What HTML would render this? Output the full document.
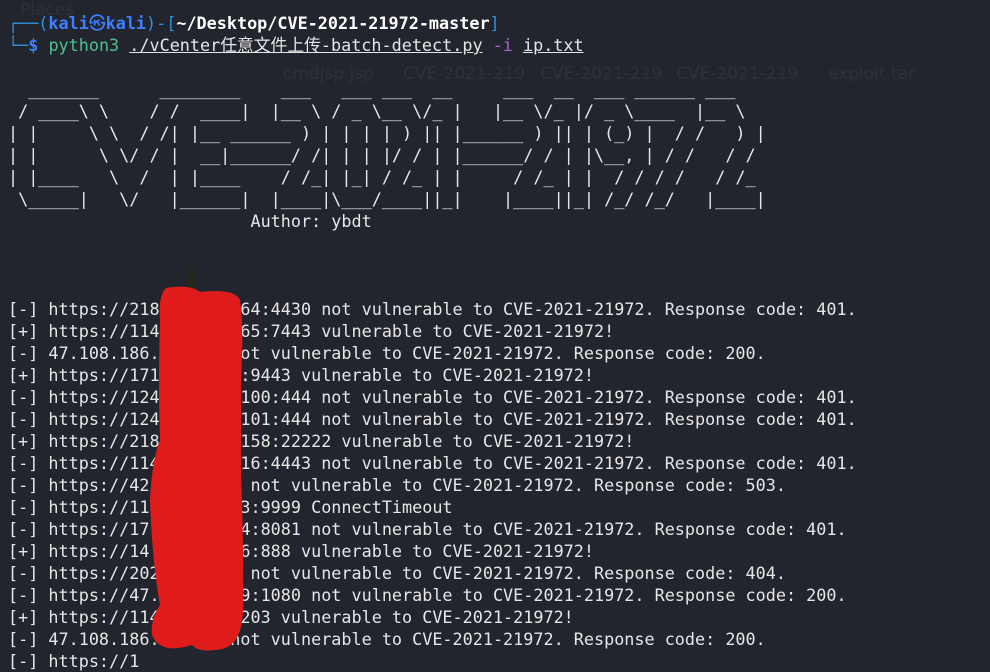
<!DOCTYPE html>
<html><head><meta charset="utf-8"><style>
body{margin:0;width:990px;height:655px;overflow:hidden;background:#23252e;position:relative}
pre{margin:0;position:absolute;left:8px;top:12px;font-family:"DejaVu Sans Mono","Liberation Mono","Noto Sans CJK SC",monospace;font-size:16.8px;line-height:22px;color:#e6e6e6;white-space:pre}
.f{color:#2f8fd8}.k{color:#3d7fff;font-weight:bold}.w{color:#fff;font-weight:bold}.g{color:#4fc08d}.p{color:#b15fd6}.u{text-decoration:underline}
.line{position:absolute;left:190px;top:268px;width:3px;height:24px;background:#2a2a14}
.bg{position:absolute;color:#2e313b;font-family:"DejaVu Sans",sans-serif;font-size:17px}
svg{position:absolute;left:0;top:0}
</style></head><body>
<div class="bg" style="left:20px;top:0">Places</div>
<div class="bg" style="left:283px;top:64px">cmdjsp.jsp</div>
<div class="bg" style="left:403px;top:64px">CVE-2021-219</div>
<div class="bg" style="left:540px;top:64px">CVE-2021-219</div>
<div class="bg" style="left:676px;top:64px">CVE-2021-219</div>
<div class="bg" style="left:828px;top:64px">exploit.tar</div>
<pre><span class="f">┌──(</span><span class="k">kali㉿kali</span><span class="f">)-[</span><span class="w">~/Desktop/CVE-2021-21972-master</span><span class="f">]</span>
<span class="f">└─</span><span class="k">$</span> <span class="g">python3</span> <span class="u">./vCenter任意文件上传-batch-detect.py</span> <span class="p">-i</span> <span class="u">ip.txt</span>

  _______      ________    ___   ___ ___  __     ___  __  ___ ______ ___  
 / ____\ \    / /  ____|  |__ \ / _ \__ \/_ |   |__ \/_ |/ _ \____  |__ \ 
| |     \ \  / /| |__ ______ ) | | | | ) || |______ ) || | (_) |  / /   ) |
| |      \ \/ / |  __|______/ /| | | |/ / | |______/ / | |\__, | / /   / / 
| |____   \  /  | |____    / /_| |_| / /_ | |     / /_ | |  / / / /   / /_ 
 \_____|   \/   |______|  |____|\___/____||_|    |____||_| /_/ /_/   |____|
                        Author: ybdt



[-] https://218.xx.xx.164:4430 not vulnerable to CVE-2021-21972. Response code: 401.
[+] https://114.xx.x2.165:7443 vulnerable to CVE-2021-21972!
[-] 47.108.186.xxxxxx not vulnerable to CVE-2021-21972. Response code: 200.
[+] https://171.xx.xx.1:9443 vulnerable to CVE-2021-21972!
[-] https://124.xx.xxx.100:444 not vulnerable to CVE-2021-21972. Response code: 401.
[-] https://124.xx.xxx.101:444 not vulnerable to CVE-2021-21972. Response code: 401.
[+] https://218.xx.xxx.158:22222 vulnerable to CVE-2021-21972!
[-] https://114.xx.xxx.16:4443 not vulnerable to CVE-2021-21972. Response code: 401.
[-] https://42.xxx.xx.5 not vulnerable to CVE-2021-21972. Response code: 503.
[-] https://11.xx.xx.103:9999 ConnectTimeout
[-] https://17.xx.xx.154:8081 not vulnerable to CVE-2021-21972. Response code: 401.
[+] https://14.xx.xxx.26:888 vulnerable to CVE-2021-21972!
[-] https://202.xx.xxx5 not vulnerable to CVE-2021-21972. Response code: 404.
[-] https://47.xx.xxx.79:1080 not vulnerable to CVE-2021-21972. Response code: 200.
[+] https://114.xx.xxx.203 vulnerable to CVE-2021-21972!
[-] 47.108.186.xxxxxx not vulnerable to CVE-2021-21972. Response code: 200.
[-] https://1</pre>
<div class="line"></div>
<svg width="990" height="655"><path d="M166 288 Q190 284 200 292 Q234 288 240 300 Q244 330 241 380 L241 470 Q244 560 243 610 Q242 650 214 650 Q198 652 192 645 Q160 655 152 635 Q150 620 160 605 Q152 560 150 500 Q152 460 160 440 Q158 380 160 320 Q158 296 166 288 Z" fill="#e01b1b"/></svg>
</body></html>
